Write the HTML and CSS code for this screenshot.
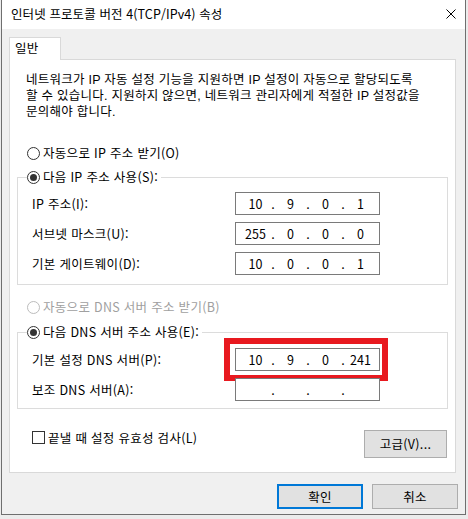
FILE: index.html
```html
<!DOCTYPE html>
<html lang="ko">
<head>
<meta charset="utf-8">
<title>인터넷 프로토콜 버전 4(TCP/IPv4) 속성</title>
<link rel="stylesheet" href="styles.css">
</head>
<body>
<div class="window">
  <div class="titlebar">
    <span class="title">인터넷 프로토콜 버전 4(TCP/IPv4) 속성</span>
    <span class="close"><svg width="10" height="10" viewBox="0 0 10 10"><path d="M0.5 0.5 L9.5 9.5 M9.5 0.5 L0.5 9.5" stroke="#000" stroke-width="1" fill="none"/></svg></span>
  </div>
  <div class="content">
    <div class="tabs"><div class="tab">일반</div></div>
    <div class="panel">
      <p class="desc">네트워크가 IP 자동 설정 기능을 지원하면 IP 설정이 자동으로 할당되도록<br>할 수 있습니다. 지원하지 않으면, 네트워크 관리자에게 적절한 IP 설정값을<br>문의해야 합니다.</p>
      <div class="radio-row first"><span class="radio"></span>자동으로 IP 주소 받기(O)</div>
      <fieldset class="group group-ip">
        <legend class="radio-row legend"><span class="radio checked"></span>다음 IP 주소 사용(S):</legend>
        <div class="field-row"><span class="field-label">IP 주소(I):</span><span class="ipbox"><span class="seg">10</span><span class="dot">.</span><span class="seg">9</span><span class="dot">.</span><span class="seg">0</span><span class="dot">.</span><span class="seg">1</span></span></div>
        <div class="field-row"><span class="field-label">서브넷 마스크(U):</span><span class="ipbox"><span class="seg">255</span><span class="dot">.</span><span class="seg">0</span><span class="dot">.</span><span class="seg">0</span><span class="dot">.</span><span class="seg">0</span></span></div>
        <div class="field-row"><span class="field-label">기본 게이트웨이(D):</span><span class="ipbox"><span class="seg">10</span><span class="dot">.</span><span class="seg">0</span><span class="dot">.</span><span class="seg">0</span><span class="dot">.</span><span class="seg">1</span></span></div>
      </fieldset>
      <div class="radio-row disabled"><span class="radio"></span>자동으로 DNS 서버 주소 받기(B)</div>
      <fieldset class="group group-dns">
        <legend class="radio-row legend"><span class="radio checked"></span>다음 DNS 서버 주소 사용(E):</legend>
        <div class="field-row"><span class="field-label">기본 설정 DNS 서버(P):</span><span class="ipbox highlighted"><span class="seg">10</span><span class="dot">.</span><span class="seg">9</span><span class="dot">.</span><span class="seg">0</span><span class="dot">.</span><span class="seg">241</span><span class="redbox"></span></span></div>
        <div class="field-row"><span class="field-label">보조 DNS 서버(A):</span><span class="ipbox"><span class="seg"></span><span class="dot">.</span><span class="seg"></span><span class="dot">.</span><span class="seg"></span><span class="dot">.</span><span class="seg"></span></span></div>
      </fieldset>
      <div class="bottom-row">
        <div class="check-row"><span class="checkbox"></span>끝낼 때 설정 유효성 검사(L)</div>
        <button class="btn btn-adv">고급(V)...</button>
      </div>
    </div>
    <div class="dialog-buttons">
      <button class="btn btn-dialog btn-default">확인</button>
      <button class="btn btn-dialog">취소</button>
    </div>
  </div>
</div>
</body>
</html>
```

FILE: styles.css
```css
html, body {
  margin: 0;
  padding: 0;
}
body {
  background: #ececec;
  font-family: "Noto Sans CJK KR", sans-serif;
  font-size: 12.5px;
  letter-spacing: 0.3px;
  color: #000;
}
.window {
  box-sizing: border-box;
  margin-left: 1px;
  width: 465px;
  height: 515px;
  border: 1px solid #6f6f6f;
  border-top: none;
  background: #f0f0f0;
  display: flex;
  flex-direction: column;
}
.titlebar {
  height: 29px;
  background: #fff;
  display: flex;
  align-items: center;
  justify-content: space-between;
  padding: 0 9px 0 9px;
}
.title {
  line-height: 16px;
  margin-top: -2px;
  letter-spacing: 0.1px;
}
.close {
  display: flex;
  margin-top: -2px;
}
.content {
  padding: 8px 9px 0 7px;
  display: flex;
  flex-direction: column;
}
.tabs {
  height: 22px;
  display: flex;
}
.tab {
  position: relative;
  z-index: 1;
  box-sizing: border-box;
  width: 52px;
  height: 23px;
  border: 1px solid #d9d9d9;
  border-bottom: none;
  background: #fff;
  padding-left: 5px;
  line-height: 19px;
}
.panel {
  border: 1px solid #d9d9d9;
  background: #fff;
  padding-bottom: 14px;
}
.desc {
  margin: 12px 0 -1px 16px;
  font-family: "Liberation Sans", "Noto Sans CJK KR", sans-serif;
  letter-spacing: 0.25px;
  line-height: 16px;
  white-space: nowrap;
}
.radio-row {
  display: flex;
  align-items: center;
  gap: 3px;
  height: 14px;
  line-height: 14px;
}
.radio-row.first {
  margin: 27px 0 0 17px;
}
.radio-row.disabled {
  margin: 15px 0 0 17px;
  color: #a0a0a0;
}
.radio-row.disabled .radio {
  border-color: #bcbcbc;
}
.radio {
  box-sizing: border-box;
  width: 13px;
  height: 13px;
  border: 1px solid #333;
  border-radius: 50%;
  background: #fff;
  display: flex;
  align-items: center;
  justify-content: center;
  flex: none;
}
.radio.checked::after {
  content: "";
  width: 7px;
  height: 7px;
  border-radius: 50%;
  background: #333;
}
.group {
  margin: 10px 7px 0 7px;
  padding: 8px 0 9px 0;
  border: 1px solid #dcdcdc;
  min-width: 0;
  display: flex;
  flex-direction: column;
  gap: 7px;
}
.group-dns {
  margin-top: 11px;
  padding-top: 9px;
  padding-bottom: 7px;
}
.legend {
  margin-left: 9px;
  padding: 0 3px 0 0;
}
.field-row {
  display: flex;
  align-items: center;
  padding-left: 14px;
  height: 23px;
}
.field-label {
  width: 203px;
  line-height: 23px;
}
.ipbox {
  position: relative;
  box-sizing: border-box;
  width: 145px;
  height: 23px;
  border: 1px solid #7a7a7a;
  background: #fff;
  display: flex;
  align-items: center;
  padding-left: 4px;
  line-height: 21px;
  letter-spacing: 0;
}
.seg {
  width: 31px;
  text-align: center;
}
.dot {
  width: 4px;
  text-align: center;
}
.redbox {
  position: absolute;
  left: -12px;
  top: -11px;
  width: 164px;
  height: 43px;
  box-sizing: border-box;
  border: 6px solid #e8191f;
}
.bottom-row {
  margin-top: 21px;
  padding: 0 8px 0 22px;
  display: flex;
  justify-content: space-between;
  align-items: flex-start;
}
.check-row {
  display: flex;
  align-items: center;
  gap: 3px;
  margin-top: 1px;
  line-height: 13px;
}
.checkbox {
  box-sizing: border-box;
  width: 13px;
  height: 13px;
  border: 1px solid #333;
  background: #fff;
}
.btn {
  box-sizing: border-box;
  font-family: "Noto Sans CJK KR", sans-serif;
  font-size: 12.5px;
  letter-spacing: 0.3px;
  color: #000;
  background: #e1e1e1;
  border: 1px solid #adadad;
  padding: 0;
  margin: 0;
  line-height: 16px;
}
.btn-adv {
  width: 83px;
  height: 28px;
}
.dialog-buttons {
  margin-top: 11px;
  margin-right: -2px;
  display: flex;
  justify-content: flex-end;
  gap: 9px;
}
.btn-dialog {
  width: 86px;
  height: 25px;
}
.btn-default {
  border: 2px solid #0078d7;
}
```
